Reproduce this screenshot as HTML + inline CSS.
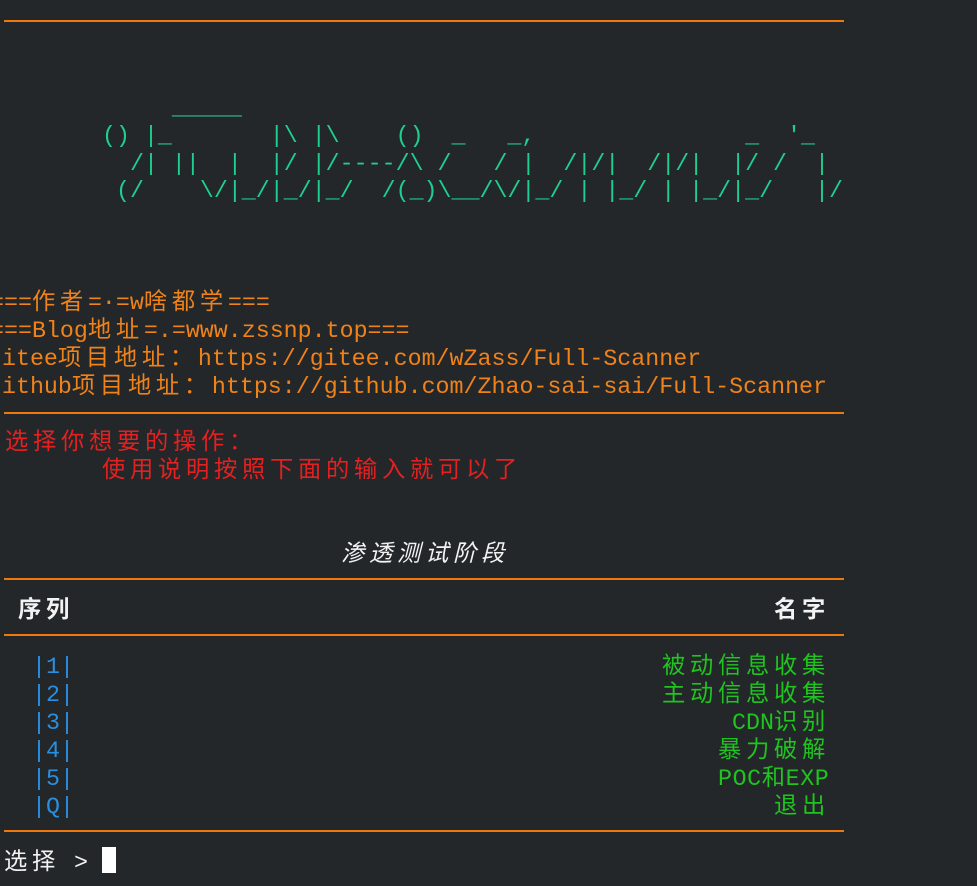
<!DOCTYPE html>
<html><head><meta charset="utf-8"><style>
html,body{margin:0;padding:0;background:#232729;width:977px;height:886px;overflow:hidden;position:relative}
.t{position:absolute;white-space:pre;font-family:"Liberation Mono","Noto Sans CJK SC",monospace;font-size:23.3px;line-height:28px;height:28px}
.c{letter-spacing:4.7px}
.hr{position:absolute;left:4px;width:840px;height:2px;background:#f0770f}
.a{color:#1fcf8f}
.o{color:#f0821a}
.r{color:#e52020}
.w{color:#f2f2f2}
.b{color:#2b8fe0}
.g{color:#1fc41f}
</style></head><body>
<div class="hr" style="top:20px"></div>
<div class="t a" style="left:102px;top:94px">     _____</div>
<div class="t a" style="left:102px;top:122px">() |_       |\ |\    ()  _   _,               _  '_</div>
<div class="t a" style="left:102px;top:150px">  /| ||  |  |/ |/----/\ /   / |  /|/|  /|/|  |/ /  |</div>
<div class="t a" style="left:102px;top:177px"> (/    \/|_/|_/|_/  /(_)\__/\/|_/ | |_/ | |_/|_/   |/</div>

<div class="t o" style="left:-10px;top:289px">===<span class="c">作者</span>=·=w<span class="c">啥都学</span>===</div>
<div class="t o" style="left:-10px;top:317px">===Blog<span class="c">地址</span>=.=www.zssnp.top===</div>
<div class="t o" style="left:-12px;top:345px">gitee<span class="c">项目地址：</span>https://gitee.com/wZass/Full-Scanner</div>
<div class="t o" style="left:-12px;top:373px">github<span class="c">项目地址：</span>https://github.com/Zhao-sai-sai/Full-Scanner</div>
<div class="hr" style="top:412px"></div>
<div class="t r" style="left:5px;top:429px"><span class="c">选择你想要的操作：</span></div>
<div class="t r" style="left:102px;top:457px"><span class="c">使用说明按照下面的输入就可以了</span></div>

<div class="t w" style="left:341px;top:541px;font-style:italic"><span class="c">渗透测试阶段</span></div>
<div class="hr" style="top:578px"></div>
<div class="t w" style="left:18px;top:597px;font-weight:bold"><span class="c">序列</span></div>
<div class="t w" style="left:774px;top:597px;font-weight:bold"><span class="c">名字</span></div>
<div class="hr" style="top:634px"></div>

<div class="t b" style="left:32px;top:653px">|1|</div>
<div class="t b" style="left:32px;top:681px">|2|</div>
<div class="t b" style="left:32px;top:709px">|3|</div>
<div class="t b" style="left:32px;top:737px">|4|</div>
<div class="t b" style="left:32px;top:765px">|5|</div>
<div class="t b" style="left:32px;top:793px">|Q|</div>

<div class="t g" style="left:662px;top:653px"><span class="c">被动信息收集</span></div>
<div class="t g" style="left:662px;top:681px"><span class="c">主动信息收集</span></div>
<div class="t g" style="left:732px;top:709px">CDN<span class="c">识别</span></div>
<div class="t g" style="left:718px;top:737px"><span class="c">暴力破解</span></div>
<div class="t g" style="left:718px;top:765px;letter-spacing:0.6px">POC和EXP</div>
<div class="t g" style="left:774px;top:793px"><span class="c">退出</span></div>
<div class="hr" style="top:830px"></div>

<div class="t w" style="left:4px;top:849px"><span class="c">选择</span> &gt;</div>
<div style="position:absolute;left:102px;top:847px;width:14px;height:26px;background:#fff"></div>
</body></html>
